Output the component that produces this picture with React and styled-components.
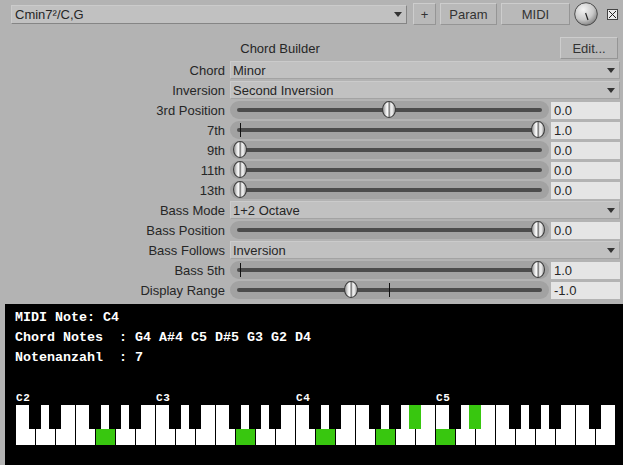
import React from "react";
import styled, { createGlobalStyle } from "styled-components";

const GlobalStyle = createGlobalStyle`
  html, body {
    margin: 0;
    padding: 0;
    background: #b3b3b3;
  }
  body {
    font-family: "Liberation Sans", Arial, sans-serif;
    font-size: 13px;
    color: #262626;
  }
`;

const Page = styled.div`
  width: 623px;
  height: 465px;
  display: flex;
  flex-direction: column;
  overflow: hidden;
  background: #b3b3b3;
`;

const TopBar = styled.div`
  display: flex;
  align-items: center;
  height: 22px;
  padding: 3px 0 0 11px;
`;

const Combo = styled.div`
  box-sizing: border-box;
  display: flex;
  align-items: center;
  justify-content: space-between;
  width: ${({ $width }) => ($width ? `${$width}px` : "auto")};
  flex: ${({ $width }) => ($width ? "none" : "1")};
  height: ${({ $height }) => $height || 18}px;
  padding: 0 4px 0 ${({ $pad }) => $pad || 2}px;
  background: #c1c1c1;
  border: 1px solid #a3a3a3;
  border-top-color: #cbcbcb;
  border-left-color: #cbcbcb;
  border-bottom-color: ${({ $dark }) => ($dark ? "#858585" : "#a3a3a3")};
  border-right-color: ${({ $dark }) => ($dark ? "#858585" : "#a3a3a3")};
  white-space: nowrap;
`;

const Arrow = styled.span`
  width: 0;
  height: 0;
  border-left: 4.5px solid transparent;
  border-right: 4.5px solid transparent;
  border-top: 5px solid #333;
`;

const Button = styled.div`
  box-sizing: border-box;
  display: flex;
  align-items: center;
  justify-content: center;
  width: ${({ $width }) => $width}px;
  height: 22px;
  margin-left: ${({ $gap }) => $gap || 4}px;
  background: #b9b9b9;
  border: 1px solid #959595;
  border-top-color: #cdcdcd;
  border-left-color: #cdcdcd;
  color: #333;
`;

const Knob = styled.svg`
  width: 24px;
  height: 24px;
  margin-left: 4px;
`;

const CheckBox = styled.svg`
  width: 11px;
  height: 11px;
  margin-left: 9px;
`;

const HeaderRow = styled.div`
  display: flex;
  align-items: center;
  height: 22px;
  margin: 12px 5px 1px 4px;
`;

const Title = styled.div`
  flex: 1;
  text-align: center;
  color: #262626;
`;

const Rows = styled.div`
  display: flex;
  flex-direction: column;
`;

const Row = styled.div`
  display: grid;
  grid-template-columns: 225px 1fr;
  column-gap: 5px;
  align-items: center;
  height: 20px;
  padding-right: 3px;
`;

const Label = styled.div`
  text-align: right;
  white-space: nowrap;
`;

const SliderBox = styled.div`
  display: flex;
  align-items: center;
`;

const Track = styled.div`
  flex: 1;
  height: 18px;
  border-radius: 9px;
  background: #a2a2a2;
  padding: 0 11px 0 10px;
  display: flex;
  align-items: center;
`;

const Rail = styled.div`
  position: relative;
  flex: 1;
  height: 18px;

  &::before {
    content: "";
    position: absolute;
    left: -3px;
    right: -4px;
    top: 7px;
    height: 4px;
    border-radius: 2px;
    background: #4b4b4b;
  }
`;

const Tick = styled.div`
  position: absolute;
  top: 2px;
  width: 1px;
  height: 14px;
  margin-left: -0.5px;
  background: #111;
`;

const Thumb = styled.div`
  position: absolute;
  top: 0px;
  box-sizing: border-box;
  width: 14px;
  height: 17px;
  margin-left: -7px;
  border-radius: 50%;
  border: 1px solid #3b3b3b;
  background: linear-gradient(
    90deg,
    #8d8d8d 0%,
    #e6e6e6 25%,
    #ffffff 42%,
    #5c5c5c 50%,
    #d8d8d8 62%,
    #f2f2f2 75%,
    #9a9a9a 100%
  );
  z-index: 1;
`;

const ValueBox = styled.div`
  box-sizing: border-box;
  width: 69px;
  height: 17px;
  margin-left: 2px;
  padding-left: 3px;
  display: flex;
  align-items: center;
  background: #e5e5e5;
`;

const Panel = styled.div`
  flex: 1;
  margin: 4px 0 0 5px;
  padding: 4px 10px 0 10px;
  background: #000;
  color: #fff;
`;

const Line = styled.div`
  height: 20px;
  line-height: 20px;
  font-family: "Liberation Mono", "DejaVu Sans Mono", monospace;
  font-weight: bold;
  font-size: 13.33px;
  white-space: pre;
`;

const Keys = styled.svg`
  display: block;
  margin: 17px 0 0 1px;
`;

const rows = [
  { label: "Chord", select: "Minor" },
  { label: "Inversion", select: "Second Inversion" },
  { label: "3rd Position", pos: 0.5, value: "0.0" },
  { label: "7th", pos: 1, tick: 0, value: "1.0" },
  { label: "9th", pos: 0, value: "0.0" },
  { label: "11th", pos: 0, value: "0.0" },
  { label: "13th", pos: 0, value: "0.0" },
  { label: "Bass Mode", select: "1+2 Octave" },
  { label: "Bass Position", pos: 1, value: "0.0" },
  { label: "Bass Follows", select: "Inversion" },
  { label: "Bass 5th", pos: 1, tick: 0, value: "1.0" },
  { label: "Display Range", pos: 0.374, tick: 0.5, value: "-1.0" },
];

const WHITE = ["C", "D", "E", "F", "G", "A", "B"];
const HAS_BLACK = [true, true, false, true, true, true, false];
const lit = ["G2", "G3", "D4", "G4", "A#4", "C5", "D#5"];
const GREEN = "#38c70f";

const Keyboard = () => {
  const whites = [];
  const blacks = [];
  for (let i = 0; i < 30; i++) {
    const name = WHITE[i % 7];
    const oct = 2 + Math.floor(i / 7);
    const x = i * 20;
    whites.push(
      <g key={`w${i}`}>
        <rect x={x} y={20} width={19} height={40} fill="#fff" />
        {lit.includes(`${name}${oct}`) && (
          <rect x={x} y={44} width={19} height={16} fill={GREEN} />
        )}
      </g>
    );
    if (HAS_BLACK[i % 7] && i < 29) {
      const on = lit.includes(`${name}#${oct}`);
      blacks.push(
        <rect key={`b${i}`} x={x + 13} y={20} width={12} height={24} fill={on ? GREEN : "#000"} />
      );
    }
  }
  return (
    <Keys width="600" height="62" viewBox="0 0 600 62">
      {[0, 1, 2, 3].map((o) => (
        <text
          key={o}
          x={o * 140}
          y={16}
          fill="#fff"
          fontFamily="'Liberation Mono', monospace"
          fontWeight="bold"
          fontSize="11"
          letterSpacing="0.6"
        >
          {`C${o + 2}`}
        </text>
      ))}
      {whites}
      {blacks}
    </Keys>
  );
};

const Slider = ({ pos, tick, value }) => (
  <SliderBox>
    <Track>
      <Rail>
        {tick !== undefined && <Tick style={{ left: `${tick * 100}%` }} />}
        <Thumb style={{ left: `${pos * 100}%` }} />
      </Rail>
    </Track>
    <ValueBox>{value}</ValueBox>
  </SliderBox>
);

export default function App() {
  return (
    <Page>
      <GlobalStyle />
      <TopBar>
        <Combo $width={396} $height={19} $pad={3} $dark>
          <span>Cmin7²/C,G</span>
          <Arrow />
        </Combo>
        <Button $width={23} $gap={6}>+</Button>
        <Button $width={57}>Param</Button>
        <Button $width={69}>MIDI</Button>
        <Knob viewBox="0 0 24 24">
          <defs>
            <radialGradient id="kg" cx="0.38" cy="0.3" r="0.75">
              <stop offset="0" stopColor="#f4f4f4" />
              <stop offset="0.6" stopColor="#c9c9c9" />
              <stop offset="1" stopColor="#7d7d7d" />
            </radialGradient>
          </defs>
          <circle cx="12" cy="12" r="11.3" fill="url(#kg)" stroke="#4a4a4a" strokeWidth="1" />
          <line x1="11.6" y1="11" x2="14" y2="18" stroke="#222" strokeWidth="1.2" />
        </Knob>
        <CheckBox viewBox="0 0 11 11">
          <rect x="0.5" y="0.5" width="10" height="10" fill="#ececec" stroke="#444" />
          <path d="M2 2 L9 9 M9 2 L2 9" stroke="#222" strokeWidth="1" />
        </CheckBox>
      </TopBar>
      <HeaderRow>
        <Title>Chord Builder</Title>
        <Button $width={58}>Edit...</Button>
      </HeaderRow>
      <Rows>
        {rows.map((r) => (
          <Row key={r.label}>
            <Label>{r.label}</Label>
            {r.select ? (
              <Combo>
                <span>{r.select}</span>
                <Arrow />
              </Combo>
            ) : (
              <Slider pos={r.pos} tick={r.tick} value={r.value} />
            )}
          </Row>
        ))}
      </Rows>
      <Panel>
        <Line>MIDI Note: C4</Line>
        <Line>Chord Notes  : G4 A#4 C5 D#5 G3 G2 D4</Line>
        <Line>Notenanzahl  : 7</Line>
        <Keyboard />
      </Panel>
    </Page>
  );
}
